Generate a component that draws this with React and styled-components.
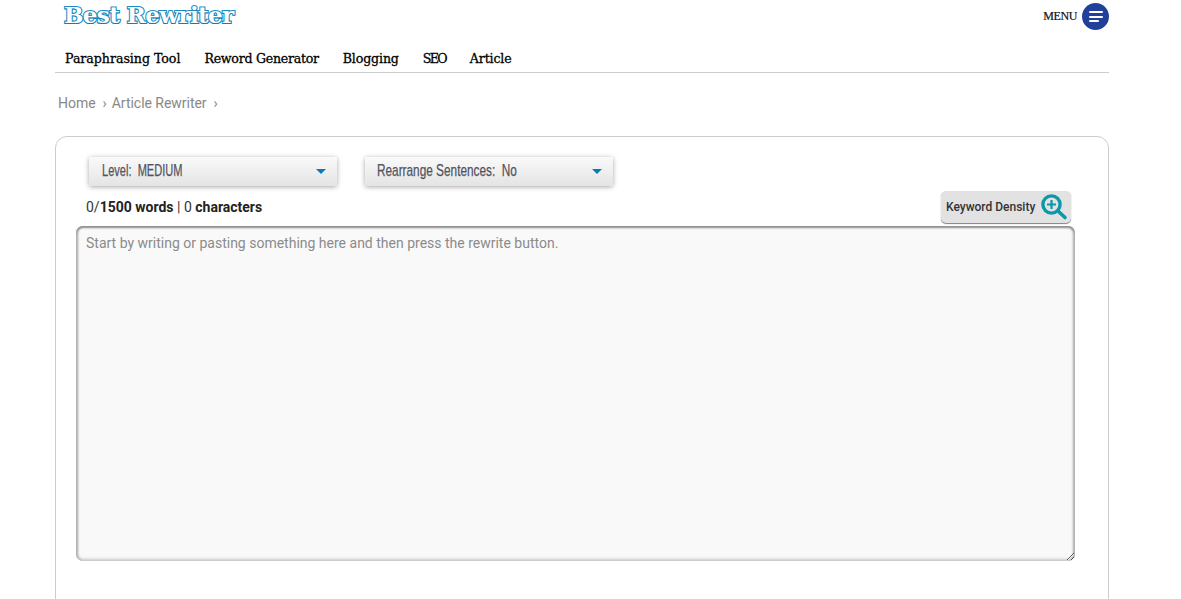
import React from "react";
import styled, { createGlobalStyle } from "styled-components";

const Global = createGlobalStyle`
  html, body {
    margin: 0;
    height: 100%;
    overflow: hidden;
    background: #fff;
    font-family: Roboto, "Liberation Sans", sans-serif;
  }
`;

const Page = styled.div`
  width: 1054px;
  margin-left: 55px;
  height: 599px;
  overflow: hidden;
`;

const TopBar = styled.div`
  height: 44px;
  display: flex;
  justify-content: space-between;
  align-items: flex-start;
`;

const Logo = styled.div`
  margin: 0 0 0 9px;
  font-family: "DejaVu Serif", serif;
  font-weight: 700;
  font-size: 23px;
  line-height: 30px;
  letter-spacing: -0.6px;
  color: #fff;
  -webkit-text-stroke: 2.2px #1a8cc4;
  paint-order: stroke fill;
  text-shadow: 0 1px 0 #0b7fb5;
`;

const MenuButton = styled.div`
  display: flex;
  align-items: center;
  gap: 5px;
  margin-top: 3px;
  font-family: "Liberation Serif", serif;
  font-size: 12px;
  letter-spacing: -0.4px;
  color: #111;
  -webkit-text-stroke: 0.2px #111;
`;

const MenuCircle = styled.span`
  width: 27px;
  height: 27px;
  border-radius: 50%;
  background: #21409a;
  display: flex;
  flex-direction: column;
  align-items: center;
  justify-content: center;
  gap: 2.5px;
`;

const MenuLine = styled.i`
  display: block;
  height: 2px;
  border-radius: 1px;
  background: #fff;
  width: ${(p) => p.$w}px;
  margin-right: ${(p) => 14 - p.$w}px;
`;

const Nav = styled.nav`
  height: 28px;
  padding-left: 10px;
  display: flex;
  gap: 24px;
  border-bottom: 1px solid #ccc;
`;

const NavItem = styled.a`
  font-family: "DejaVu Serif", serif;
  font-size: 12.6px;
  font-weight: 400;
  line-height: 30px;
  height: 28px;
  letter-spacing: ${(p) => p.$ls}px;
  color: #000;
  -webkit-text-stroke: 0.3px #000;
`;

const Crumbs = styled.div`
  height: 63px;
  padding: 22px 0 0 3px;
  box-sizing: border-box;
  display: flex;
  gap: 7px;
  font-size: 14px;
  line-height: 17px;
  letter-spacing: -0.03px;
  color: #888;
`;

const CrumbLink = styled.span`
  margin-right: ${(p) => p.$mr || 0}px;
`;

const Card = styled.section`
  border: 1px solid #ccc;
  border-radius: 12px;
  height: 500px;
  padding: 20px 33px 0 20px;
  box-sizing: border-box;
`;

const Selects = styled.div`
  display: flex;
  gap: 28px;
  padding-left: 13px;
`;

const Select = styled.div`
  width: 248px;
  height: 29px;
  padding: 0 11px 0 ${(p) => p.$pl}px;
  box-sizing: border-box;
  display: flex;
  align-items: center;
  justify-content: space-between;
  border-radius: 2px;
  background: linear-gradient(#fafafa, #e4e4e4);
  box-shadow: 0 1px 5px rgba(0, 0, 0, 0.35);
`;

const SelectText = styled.span`
  display: inline-block;
  width: 200px;
  font-family: "Liberation Sans", sans-serif;
  font-size: 17px;
  line-height: 27px;
  margin-bottom: 2px;
  white-space: pre;
  color: #51535e;
  -webkit-text-stroke: 0.25px #51535e;
  transform: scaleX(${(p) => p.$sx});
  transform-origin: left center;
`;

const Caret = styled.span`
  width: 0;
  height: 0;
  border-left: 5px solid transparent;
  border-right: 5px solid transparent;
  border-top: 5px solid #0a7ab3;
`;

const InfoRow = styled.div`
  height: 40px;
  display: flex;
  justify-content: space-between;
  align-items: flex-start;
  padding: 5px 4px 0 10px;
  box-sizing: border-box;
`;

const Counter = styled.div`
  margin-top: 8px;
  font-size: 14px;
  line-height: 17px;
  color: #333;
  b {
    font-weight: 700;
    color: #222;
  }
`;

const DensityButton = styled.button`
  width: 130px;
  height: 32px;
  padding: 0 0 0 5px;
  display: flex;
  align-items: center;
  gap: 5px;
  border: 0;
  border-radius: 5px;
  background: #e2e2e2;
  box-shadow: 0 1px 1px rgba(0, 0, 0, 0.5);
  font-family: Roboto, sans-serif;
  font-size: 12px;
  font-weight: 500;
  color: #333;
`;

const Editor = styled.textarea`
  display: block;
  width: 999px;
  height: 335px;
  margin: 0;
  padding: 9px 10px;
  box-sizing: border-box;
  border: 0;
  border-radius: 7px;
  outline: none;
  background: #f9f9f9;
  box-shadow: inset 0 2px 2px 0 #8f8f8f, inset 0 -1px 3px 1px #ccc, inset 2px 0 2px #aaa, inset -2px 0 2px #aaa;
  font-family: Roboto, sans-serif;
  font-size: 14px;
  line-height: 17px;
  color: #333;
  &::placeholder {
    color: #8b8b8b;
    opacity: 1;
  }
`;

export default function App() {
  return (
    <Page>
      <Global />
      <TopBar>
        <Logo>Best Rewriter</Logo>
        <MenuButton>
          MENU
          <MenuCircle>
            <MenuLine $w={14} />
            <MenuLine $w={14} />
            <MenuLine $w={10} />
          </MenuCircle>
        </MenuButton>
      </TopBar>
      <Nav>
        <NavItem $ls={-0.03}>Paraphrasing Tool</NavItem>
        <NavItem $ls={-0.27}>Reword Generator</NavItem>
        <NavItem $ls={-0.15}>Blogging</NavItem>
        <NavItem $ls={-1.7}>SEO</NavItem>
        <NavItem $ls={-0.15}>Article</NavItem>
      </Nav>
      <Crumbs>
        <CrumbLink>Home</CrumbLink>
        <CrumbLink $mr={-2}>›</CrumbLink>
        <CrumbLink>Article Rewriter</CrumbLink>
        <CrumbLink>›</CrumbLink>
      </Crumbs>
      <Card>
        <Selects>
          <Select $pl={13}>
            <SelectText $sx={0.65}>Level:  MEDIUM</SelectText>
            <Caret />
          </Select>
          <Select $pl={12}>
            <SelectText $sx={0.695}>Rearrange Sentences:  No</SelectText>
            <Caret />
          </Select>
        </Selects>
        <InfoRow>
          <Counter>
            0/<b>1500 words</b> | 0 <b>characters</b>
          </Counter>
          <DensityButton>
            Keyword Density
            <svg width="28" height="28" viewBox="0 0 28 28" fill="none">
              <circle cx="11.5" cy="11.5" r="8.6" stroke="#0b98a8" strokeWidth="3.4" />
              <path d="M7 11.5h9M11.5 7v9" stroke="#0b98a8" strokeWidth="2.2" />
              <path d="M18 18l7 6.5" stroke="#0b98a8" strokeWidth="3.6" strokeLinecap="round" />
            </svg>
          </DensityButton>
        </InfoRow>
        <Editor placeholder="Start by writing or pasting something here and then press the rewrite button." />
      </Card>
    </Page>
  );
}
